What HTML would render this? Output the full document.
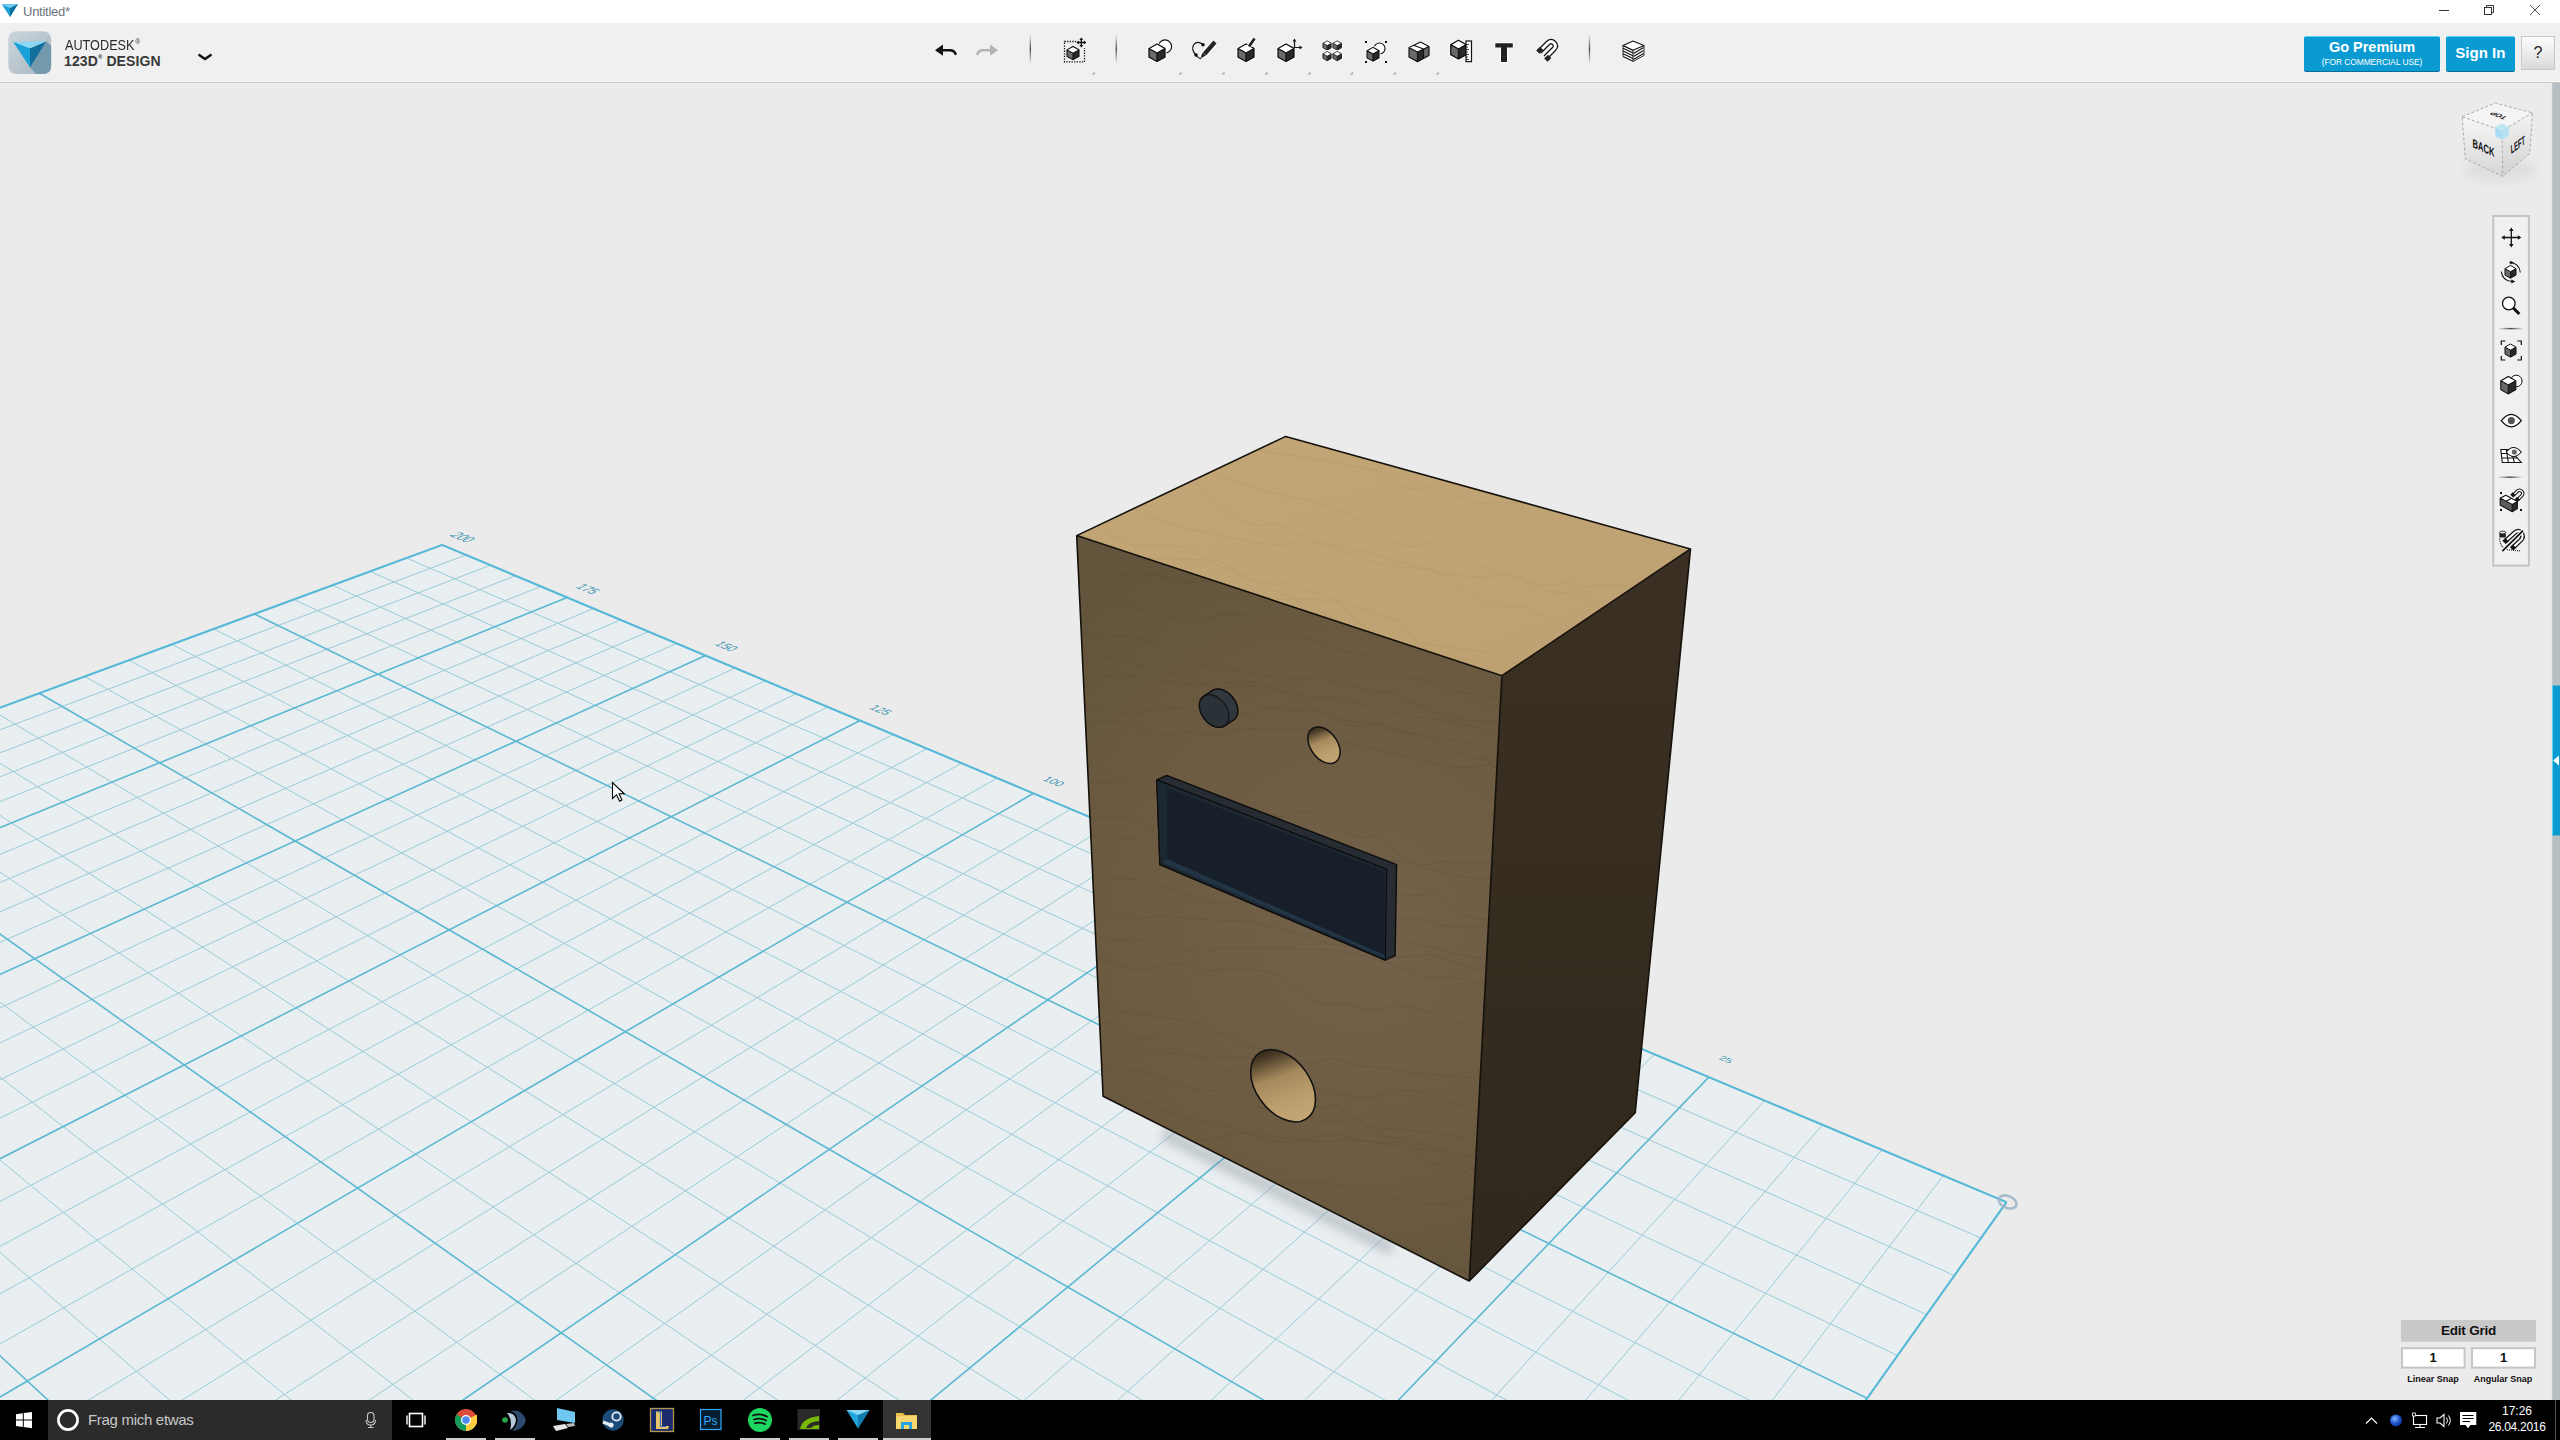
<!DOCTYPE html>
<html><head><meta charset="utf-8"><style>
*{box-sizing:border-box}
body{margin:0;width:2560px;height:1440px;overflow:hidden;position:relative;background:#ebebeb;font-family:"Liberation Sans",sans-serif}
.abs{position:absolute}
</style></head><body>
<div class="abs" style="left:0;top:0;width:2560px;height:23px;background:#fff"></div>
<div class="abs" style="left:0;top:23px;width:2560px;height:60px;background:#f0f0f0;border-bottom:1px solid #c4c4c4"></div>
<div class="abs" style="left:0;top:81px;width:2560px;height:1px;background:#f8f8f8"></div>
<div class="abs" style="left:0;top:83px;width:2552px;height:1px;background:#f3f3f3"></div>
<svg class="abs" style="left:0;top:0" width="2560" height="1440" viewBox="0 0 2560 1440">
<defs><clipPath id="vp"><rect x="0" y="84" width="2552" height="1316"/></clipPath></defs>
<g clip-path="url(#vp)">
<polygon points="2006.5,1202.2 442.1,544.9 -2431.8,1603.3 -4253.8,10013.4" fill="#e9eef1"/>
<path d="M1943.2 1175.6L-4045.0 9049.4M1881.8 1149.8L-3871.3 8247.7M1822.4 1124.8L-3724.6 7570.4M1764.7 1100.6L-3599.0 6990.8M1654.5 1054.3L-3395.3 6050.6M1601.7 1032.1L-3311.5 5664.1M1550.5 1010.6L-3237.2 5320.8M1500.8 989.7L-3170.7 5013.8M1405.3 949.6L-3056.8 4488.2M1359.5 930.3L-3007.7 4261.4M1315.0 911.6L-2962.8 4054.4M1271.6 893.4L-2921.7 3864.8M1188.1 858.3L-2849.1 3529.5M1148.0 841.5L-2816.8 3380.5M1108.9 825.0L-2786.9 3242.3M1070.7 809.0L-2759.0 3113.6M997.1 778.1L-2708.7 2881.3M961.6 763.2L-2685.9 2776.0M927.0 748.6L-2664.4 2677.2M893.2 734.4L-2644.3 2584.2M827.8 706.9L-2607.4 2413.7M796.2 693.7L-2590.4 2335.4M765.4 680.7L-2574.3 2261.3M735.2 668.0L-2559.1 2190.9M676.7 643.4L-2530.8 2060.6M648.4 631.6L-2517.7 2000.1M620.7 619.9L-2505.2 1942.4M593.6 608.5L-2493.3 1887.3M541.0 586.4L-2471.0 1784.4M515.6 575.7L-2460.6 1736.2M490.6 565.2L-2450.6 1690.1M466.1 554.9L-2441.0 1645.8M1981.0 1238.0L406.5 558.0M1954.4 1275.5L370.0 571.4M1926.6 1314.6L332.5 585.2M1897.6 1355.5L294.0 599.4M1835.2 1443.2L213.7 629.0M1801.8 1490.3L171.9 644.3M1766.6 1539.8L129.0 660.2M1729.6 1591.9L84.7 676.5M1649.6 1704.5L-7.6 710.5M1606.2 1765.6L-55.9 728.3M1560.3 1830.2L-105.7 746.6M1511.7 1898.6L-157.0 765.5M1405.2 2048.5L-264.6 805.1M1346.7 2130.8L-321.0 825.9M1284.3 2218.7L-379.3 847.4M1217.5 2312.7L-439.5 869.6M1068.8 2521.9L-566.4 916.3M985.8 2638.8L-633.1 940.9M896.0 2765.2L-702.3 966.4M798.6 2902.3L-774.1 992.8M576.7 3214.6L-925.8 1048.7M449.5 3393.6L-1006.1 1078.2M309.4 3590.8L-1089.6 1109.0M154.2 3809.2L-1176.5 1141.0M-212.3 4325.1L-1361.3 1209.1M-430.8 4632.7L-1459.7 1245.3M-679.3 4982.4L-1562.4 1283.1M-964.4 5383.7L-1669.8 1322.7M-1682.3 6394.1L-1899.8 1407.4M-2143.0 7042.4L-2023.1 1452.8M-2699.8 7826.1L-2152.6 1500.5M-3386.3 8792.4L-2288.6 1550.6" stroke="#9acbd7" stroke-width="1" fill="none"/>
<path d="M2006.5 1202.2L-4253.8 10013.4M1708.8 1077.1L-3490.3 6489.1M1452.4 969.4L-3110.9 4737.8M1229.3 875.6L-2883.9 3690.4M1033.5 793.3L-2733.0 2993.6M860.1 720.5L-2625.3 2496.5M705.6 655.6L-2544.6 2124.1M567.1 597.4L-2481.9 1834.7M442.1 544.9L-2431.8 1603.3M2006.5 1202.2L442.1 544.9M1867.1 1398.3L254.4 614.0M1690.7 1646.7L39.2 693.2M1460.1 1971.3L-209.9 785.0M1145.9 2413.5L-501.9 892.5M692.5 3051.6L-848.5 1020.2M-18.6 4052.5L-1267.0 1174.3M-1294.8 5848.7L-1782.1 1364.0M-4253.8 10013.4L-2431.8 1603.3" stroke="#5cb8d2" stroke-width="1.6" fill="none"/>
<path d="M2006.5 1202.2L442.1 544.9M442.1 544.9L-2431.8 1603.3M2006.5 1202.2L-4253.8 10013.4" stroke="#58bad8" stroke-width="2.0" fill="none"/>
<g font-family="Liberation Sans" font-size="10" fill="#3d97b2" text-anchor="middle">
<text x="0" y="3.6" transform="matrix(1.0350 0.4279 -1.5057 0.5545 463.01 537.15)">200</text>
<text x="0" y="3.6" transform="matrix(1.0350 0.4279 -1.3668 0.5547 588.06 588.84)">175</text>
<text x="0" y="3.6" transform="matrix(1.0350 0.4279 -1.2279 0.5548 726.59 646.11)">150</text>
<text x="0" y="3.6" transform="matrix(1.0350 0.4279 -1.0891 0.5550 880.90 709.91)">125</text>
<text x="0" y="3.6" transform="matrix(1.0350 0.4279 -0.9502 0.5551 1053.85 781.42)">100</text>
<text x="0" y="3.6" transform="matrix(1.0350 0.4279 -0.8114 0.5552 1249.05 862.12)">75</text>
<text x="0" y="3.6" transform="matrix(1.0350 0.4279 -0.6725 0.5554 1471.08 953.91)">50</text>
<text x="0" y="3.6" transform="matrix(1.0350 0.4279 -0.5336 0.5555 1725.88 1059.25)">25</text>
</g>
<ellipse cx="0" cy="0" rx="9.3" ry="6" transform="translate(2007.6 1202) rotate(22)" fill="none" stroke="#9db4c6" stroke-width="2.6" opacity="0.85"/>
<defs>
<radialGradient id="gfront" gradientUnits="userSpaceOnUse" cx="1360" cy="930" r="420"><stop offset="0" stop-color="#73614a"/><stop offset="0.6" stop-color="#6c5b41"/><stop offset="1" stop-color="#63543c"/></radialGradient>
<linearGradient id="gtop" x1="0" y1="0" x2="1" y2="1"><stop offset="0" stop-color="#c3a676"/><stop offset="1" stop-color="#bea172"/></linearGradient>
<linearGradient id="gright" x1="0" y1="0" x2="0" y2="1"><stop offset="0" stop-color="#3b3023"/><stop offset="1" stop-color="#30281d"/></linearGradient>
<linearGradient id="ghole" x1="0.1" y1="0.05" x2="0.75" y2="0.9"><stop offset="0" stop-color="#1e170e"/><stop offset="0.18" stop-color="#4a3b27"/><stop offset="0.45" stop-color="#a68a5d"/><stop offset="0.75" stop-color="#bc9e6d"/><stop offset="1" stop-color="#c4a675"/></linearGradient>
<filter id="blur6" x="-50%" y="-50%" width="200%" height="200%"><feGaussianBlur stdDeviation="5"/></filter>
</defs>
<polygon points="1165.0,1126.0 1395.0,1243.0 1390.0,1256.0 1160.0,1140.0" fill="#7f8a90" opacity="0.35" filter="url(#blur6)"/>
<polygon points="1076.7,535.6 1501.9,675.7 1469.3,1281.0 1103.1,1096.2" fill="url(#gfront)"/>
<polygon points="1501.9,675.7 1690.5,548.9 1635.2,1112.7 1469.3,1281.0" fill="url(#gright)"/>
<polygon points="1285.7,436.4 1690.5,548.9 1501.9,675.7 1076.7,535.6" fill="url(#gtop)"/>
<clipPath id="cfront"><polygon points="1076.7,535.6 1501.9,675.7 1469.3,1281.0 1103.1,1096.2"/></clipPath><clipPath id="ctop"><polygon points="1285.7,436.4 1690.5,548.9 1501.9,675.7 1076.7,535.6"/></clipPath>
<g clip-path="url(#cfront)" fill="none" stroke="#4a3d2b" stroke-width="0.8" opacity="0.2"><path d="M1070 556.5 Q1092.5 562.6 1117.5 574.6 Q1159.3 570.7 1184.3 583.0 Q1224.7 578.5 1249.7 580.3 Q1268.2 577.3 1293.2 579.4 Q1349.5 571.9 1374.5 579.6 Q1420.9 610.0 1445.9 607.8 Q1480.7 624.3 1505.7 637.0 Q1563.7 632.9 1588.7 642.9"/><path d="M1070 580.4 Q1100.4 595.2 1125.4 604.1 Q1169.5 618.3 1194.5 621.8 Q1236.9 607.6 1261.9 620.0 Q1287.2 637.1 1312.2 639.1 Q1342.9 653.7 1367.9 655.0 Q1397.9 683.6 1422.9 678.0 Q1450.1 694.2 1475.1 693.5 Q1533.8 708.4 1558.8 714.3"/><path d="M1070 625.6 Q1090.9 643.0 1115.9 635.8 Q1138.5 635.5 1163.5 648.4 Q1211.9 672.5 1236.9 670.4 Q1295.7 682.6 1320.7 677.1 Q1365.4 691.6 1390.4 692.8 Q1447.4 720.2 1472.4 720.9 Q1520.6 724.6 1545.6 719.0"/><path d="M1070 646.9 Q1134.7 664.9 1159.7 670.9 Q1193.9 676.3 1218.9 689.6 Q1257.0 680.6 1282.0 691.3 Q1300.0 703.1 1325.0 713.5 Q1352.4 733.1 1377.4 722.7 Q1396.4 735.4 1421.4 734.0 Q1480.6 768.1 1505.6 757.9 Q1534.5 764.0 1559.5 768.0"/><path d="M1070 679.7 Q1132.9 671.7 1157.9 680.8 Q1184.5 684.3 1209.5 684.7 Q1253.9 675.8 1278.9 689.7 Q1314.9 700.1 1339.9 698.2 Q1402.5 718.1 1427.5 717.7 Q1473.4 724.2 1498.4 736.7 Q1558.4 769.7 1583.4 759.2"/><path d="M1070 706.0 Q1104.6 704.4 1129.6 715.5 Q1176.3 701.5 1201.3 713.6 Q1226.8 710.7 1251.8 715.2 Q1269.4 701.4 1294.4 711.2 Q1314.5 706.2 1339.5 719.5 Q1398.2 726.6 1423.2 736.4 Q1450.8 740.4 1475.8 744.2 Q1496.9 782.9 1521.9 769.1"/><path d="M1070 727.3 Q1109.2 715.1 1134.2 726.2 Q1166.3 740.4 1191.3 731.2 Q1214.4 740.7 1239.4 728.0 Q1280.8 730.2 1305.8 729.0 Q1322.2 756.4 1347.2 743.0 Q1405.3 755.9 1430.3 762.6 Q1463.7 771.9 1488.7 764.3 Q1530.3 782.0 1555.3 786.8"/><path d="M1070 750.5 Q1125.6 789.8 1150.6 779.9 Q1205.9 810.5 1230.9 803.8 Q1257.2 813.3 1282.2 817.4 Q1298.7 808.1 1323.7 814.3 Q1351.6 846.6 1376.6 833.9 Q1414.0 875.4 1439.0 861.7 Q1501.7 862.3 1526.7 870.1"/><path d="M1070 778.5 Q1094.8 785.0 1119.8 781.5 Q1179.9 805.5 1204.9 806.1 Q1252.5 817.6 1277.5 829.2 Q1325.5 864.1 1350.5 856.2 Q1403.0 859.4 1428.0 868.4 Q1482.5 884.2 1507.5 875.7 Q1571.1 882.4 1596.1 885.2"/><path d="M1070 820.9 Q1121.2 812.3 1146.2 822.7 Q1168.8 858.1 1193.8 849.5 Q1216.1 887.0 1241.1 873.6 Q1289.0 882.9 1314.0 881.5 Q1335.5 891.2 1360.5 878.0 Q1408.0 904.0 1433.0 891.9 Q1469.7 926.7 1494.7 917.5 Q1520.2 916.3 1545.2 922.1"/><path d="M1070 834.8 Q1114.3 837.4 1139.3 839.6 Q1160.9 862.5 1185.9 866.6 Q1223.8 893.7 1248.8 882.4 Q1284.8 909.7 1309.8 909.6 Q1351.4 909.9 1376.4 923.4 Q1413.4 911.7 1438.4 925.6 Q1493.4 926.7 1518.4 927.5"/><path d="M1070 872.5 Q1112.8 880.1 1137.8 879.6 Q1180.6 891.2 1205.6 902.3 Q1248.6 900.5 1273.6 906.7 Q1327.2 921.7 1352.2 920.0 Q1405.2 945.4 1430.2 947.0 Q1475.8 960.5 1500.8 960.2 Q1550.5 972.5 1575.5 971.6"/><path d="M1070 895.6 Q1132.1 925.9 1157.1 915.3 Q1219.2 921.8 1244.2 920.2 Q1306.3 934.6 1331.3 944.7 Q1352.4 943.8 1377.4 955.8 Q1404.5 959.0 1429.5 954.2 Q1483.7 971.1 1508.7 980.7 Q1559.5 989.2 1584.5 999.2"/><path d="M1070 931.7 Q1133.4 947.8 1158.4 935.1 Q1193.3 961.4 1218.3 947.7 Q1274.9 947.3 1299.9 949.2 Q1340.7 948.2 1365.7 956.7 Q1396.6 963.8 1421.6 977.3 Q1464.3 974.7 1489.3 988.2 Q1520.9 1005.8 1545.9 1005.5"/><path d="M1070 943.3 Q1134.3 979.3 1159.3 966.1 Q1179.5 958.2 1204.5 971.1 Q1258.4 965.9 1283.4 976.3 Q1319.6 1012.2 1344.6 1003.3 Q1372.5 1016.1 1397.5 1004.4 Q1441.0 1012.7 1466.0 1024.2 Q1483.9 1041.5 1508.9 1043.6 Q1527.5 1075.3 1552.5 1071.5"/><path d="M1070 986.0 Q1089.2 999.0 1114.2 1011.1 Q1172.3 1018.1 1197.3 1022.6 Q1240.0 1043.6 1265.0 1050.1 Q1286.4 1056.7 1311.4 1064.0 Q1331.9 1052.9 1356.9 1065.5 Q1382.0 1066.6 1407.0 1072.1 Q1460.0 1078.0 1485.0 1078.0 Q1508.9 1072.3 1533.9 1085.7"/><path d="M1070 1003.0 Q1085.8 1025.4 1110.8 1023.9 Q1135.2 1048.2 1160.2 1036.1 Q1180.6 1058.0 1205.6 1059.9 Q1245.3 1081.3 1270.3 1084.3 Q1310.6 1117.2 1335.6 1103.7 Q1367.8 1133.8 1392.8 1128.0 Q1439.6 1133.5 1464.6 1137.7 Q1482.3 1126.1 1507.3 1138.2 Q1559.3 1133.4 1584.3 1142.8"/><path d="M1070 1027.7 Q1127.1 1058.1 1152.1 1053.3 Q1181.2 1051.7 1206.2 1057.5 Q1244.1 1057.4 1269.1 1058.9 Q1297.3 1100.8 1322.3 1087.6 Q1364.6 1104.9 1389.6 1091.9 Q1420.1 1086.0 1445.1 1100.0 Q1479.2 1112.2 1504.2 1112.2 Q1529.3 1111.5 1554.3 1125.3"/><path d="M1070 1059.3 Q1089.5 1056.0 1114.5 1068.9 Q1130.6 1067.7 1155.6 1075.2 Q1199.9 1096.2 1224.9 1089.2 Q1272.8 1120.2 1297.8 1109.5 Q1332.2 1130.2 1357.2 1116.6 Q1379.7 1141.3 1404.7 1137.3 Q1421.9 1172.6 1446.9 1161.7 Q1493.3 1191.4 1518.3 1182.6"/><path d="M1070 1084.8 Q1111.2 1107.3 1136.2 1097.9 Q1191.4 1124.4 1216.4 1122.0 Q1276.1 1146.7 1301.1 1141.3 Q1327.6 1128.0 1352.6 1138.3 Q1385.6 1147.3 1410.6 1137.9 Q1453.5 1158.8 1478.5 1155.2 Q1527.6 1154.0 1552.6 1167.9"/><path d="M1070 1126.0 Q1122.4 1140.0 1147.4 1139.1 Q1195.4 1143.9 1220.4 1137.3 Q1248.0 1129.3 1273.0 1135.8 Q1324.5 1145.5 1349.5 1138.8 Q1413.2 1148.3 1438.2 1151.6 Q1477.2 1178.3 1502.2 1170.8 Q1548.0 1176.9 1573.0 1188.7"/><path d="M1070 1140.9 Q1097.7 1156.7 1122.7 1162.2 Q1166.1 1146.3 1191.1 1158.6 Q1219.5 1182.9 1244.5 1177.5 Q1293.3 1183.8 1318.3 1183.4 Q1356.5 1184.6 1381.5 1195.2 Q1441.2 1211.4 1466.2 1198.0 Q1528.0 1193.5 1553.0 1194.6"/><path d="M1070 1182.4 Q1133.4 1187.2 1158.4 1193.7 Q1183.9 1213.7 1208.9 1221.8 Q1253.0 1223.3 1278.0 1222.6 Q1340.6 1232.1 1365.6 1223.2 Q1406.0 1255.0 1431.0 1249.3 Q1457.6 1275.4 1482.6 1275.8 Q1498.9 1271.7 1523.9 1272.0"/><path d="M1070 1203.0 Q1100.1 1199.4 1125.1 1203.8 Q1155.9 1214.4 1180.9 1228.4 Q1233.4 1242.3 1258.4 1252.9 Q1319.8 1284.4 1344.8 1273.1 Q1374.2 1278.8 1399.2 1281.8 Q1464.2 1293.9 1489.2 1297.8 Q1525.6 1290.5 1550.6 1303.2"/><path d="M1070 1224.0 Q1126.7 1241.9 1151.7 1229.7 Q1179.2 1235.1 1204.2 1234.8 Q1228.7 1256.2 1253.7 1243.5 Q1312.9 1270.7 1337.9 1267.1 Q1398.6 1296.4 1423.6 1295.1 Q1474.6 1299.3 1499.6 1292.7 Q1537.1 1318.4 1562.1 1314.3"/><path d="M1070 1255.7 Q1087.4 1272.8 1112.4 1283.2 Q1151.1 1285.3 1176.1 1290.9 Q1228.0 1313.4 1253.0 1320.1 Q1300.8 1327.9 1325.8 1326.3 Q1360.5 1318.6 1385.5 1328.0 Q1410.9 1354.8 1435.9 1354.8 Q1461.9 1395.5 1486.9 1381.6 Q1524.4 1373.8 1549.4 1382.4"/></g>
<g clip-path="url(#ctop)" fill="none" stroke="#a68a5c" stroke-width="0.8" opacity="0.3"><path d="M1070 413.5 Q1110.5 407.7 1140.5 417.1 Q1176.0 453.8 1206.0 439.9 Q1271.0 453.3 1301.0 456.4 Q1352.4 465.6 1382.4 471.5 Q1406.2 499.4 1436.2 482.6 Q1463.7 507.4 1493.7 502.7 Q1565.5 503.1 1595.5 511.3 Q1630.4 525.4 1660.4 527.3 Q1737.6 574.7 1767.6 561.3"/><path d="M1070 434.3 Q1091.9 477.0 1121.9 462.7 Q1170.3 468.2 1200.3 486.2 Q1243.8 535.0 1273.8 523.3 Q1345.1 553.1 1375.1 562.2 Q1401.7 569.2 1431.7 568.4 Q1492.6 614.0 1522.6 606.0 Q1581.5 635.1 1611.5 636.6 Q1664.5 648.4 1694.5 638.2 Q1728.5 680.2 1758.5 675.0"/><path d="M1070 460.9 Q1097.7 475.8 1127.7 470.9 Q1189.6 460.0 1219.6 475.4 Q1271.1 494.7 1301.1 498.7 Q1334.5 505.2 1364.5 522.8 Q1402.6 557.7 1432.6 541.2 Q1491.2 575.7 1521.2 576.6 Q1555.3 603.0 1585.3 586.4 Q1647.6 581.5 1677.6 598.7 Q1727.5 622.8 1757.5 625.7"/><path d="M1070 482.1 Q1130.0 509.3 1160.0 519.1 Q1182.1 529.8 1212.1 532.6 Q1273.0 551.3 1303.0 540.6 Q1367.4 550.2 1397.4 560.8 Q1475.6 584.8 1505.6 573.2 Q1539.4 591.5 1569.4 582.1 Q1607.1 620.0 1637.1 620.2 Q1668.4 626.1 1698.4 629.1 Q1758.3 654.3 1788.3 667.0"/><path d="M1070 506.3 Q1102.8 532.4 1132.8 545.3 Q1155.9 543.8 1185.9 547.7 Q1259.8 591.4 1289.8 583.0 Q1369.6 614.1 1399.6 620.3 Q1430.8 666.6 1460.8 657.7 Q1482.7 679.9 1512.7 684.3 Q1555.1 685.6 1585.1 697.6 Q1605.3 703.4 1635.3 708.7 Q1712.6 730.4 1742.6 713.7"/><path d="M1070 525.3 Q1111.4 569.8 1141.4 558.2 Q1187.3 559.2 1217.3 560.2 Q1259.7 585.9 1289.7 596.9 Q1331.6 615.9 1361.6 632.8 Q1406.2 674.9 1436.2 665.3 Q1458.6 650.9 1488.6 666.7 Q1563.9 685.9 1593.9 677.0 Q1667.8 682.3 1697.8 690.5 Q1775.2 706.6 1805.2 715.2"/><path d="M1070 555.5 Q1109.0 548.6 1139.0 566.5 Q1204.3 608.0 1234.3 603.1 Q1310.9 594.5 1340.9 604.1 Q1389.4 658.7 1419.4 642.4 Q1462.6 649.9 1492.6 652.4 Q1542.2 678.1 1572.2 689.6 Q1640.4 730.7 1670.4 719.1 Q1736.8 737.2 1766.8 743.4"/><path d="M1070 571.1 Q1111.7 587.2 1141.7 602.4 Q1173.6 623.4 1203.6 632.5 Q1227.4 635.8 1257.4 633.9 Q1297.0 686.9 1327.0 673.1 Q1406.2 668.7 1436.2 683.7 Q1462.0 711.2 1492.0 703.6 Q1538.9 710.0 1568.9 713.0 Q1626.1 748.9 1656.1 739.9 Q1726.9 752.9 1756.9 766.5"/><path d="M1070 601.5 Q1107.6 619.6 1137.6 624.1 Q1201.9 623.0 1231.9 632.1 Q1266.6 652.1 1296.6 638.2 Q1351.3 647.5 1381.3 651.3 Q1460.9 661.9 1490.9 671.6 Q1559.4 715.4 1589.4 697.7 Q1615.5 728.2 1645.5 716.7 Q1716.0 736.7 1746.0 753.3"/><path d="M1070 614.7 Q1097.2 639.3 1127.2 622.3 Q1182.1 654.9 1212.1 659.5 Q1284.1 668.8 1314.1 677.5 Q1380.8 701.1 1410.8 715.3 Q1466.5 729.9 1496.5 740.1 Q1538.7 735.1 1568.7 745.7 Q1604.0 775.2 1634.0 769.7 Q1666.2 763.9 1696.2 770.2 Q1756.9 770.8 1786.9 777.6"/><path d="M1070 635.3 Q1137.7 641.5 1167.7 657.2 Q1193.8 674.8 1223.8 673.0 Q1282.2 664.5 1312.2 676.6 Q1373.9 685.2 1403.9 693.0 Q1442.3 724.4 1472.3 731.2 Q1526.3 742.4 1556.3 745.4 Q1628.2 780.4 1658.2 785.3 Q1690.0 803.8 1720.0 814.4"/><path d="M1070 654.1 Q1144.1 682.6 1174.1 671.0 Q1218.5 705.0 1248.5 706.4 Q1278.2 708.8 1308.2 707.0 Q1366.7 728.5 1396.7 743.3 Q1454.0 758.3 1484.0 758.2 Q1512.7 770.3 1542.7 769.5 Q1618.3 773.5 1648.3 773.9 Q1716.6 801.6 1746.6 812.5"/><path d="M1070 678.0 Q1146.6 716.4 1176.6 717.0 Q1199.8 750.1 1229.8 754.1 Q1304.0 790.6 1334.0 778.9 Q1363.7 800.3 1393.7 810.3 Q1437.9 856.0 1467.9 844.2 Q1498.9 849.3 1528.9 852.9 Q1580.0 854.7 1610.0 868.3 Q1644.8 911.6 1674.8 897.3 Q1697.3 929.0 1727.3 919.8"/><path d="M1070 698.6 Q1140.3 706.9 1170.3 703.3 Q1223.3 721.4 1253.3 728.4 Q1298.5 749.0 1328.5 751.7 Q1388.0 767.4 1418.0 769.6 Q1439.4 794.0 1469.4 794.3 Q1503.5 835.0 1533.5 824.9 Q1581.0 831.1 1611.0 832.1 Q1637.5 834.7 1667.5 837.2 Q1693.0 855.2 1723.0 854.9"/></g>
<path d="M1076.7 535.6L1285.7 436.4L1690.5 548.9L1635.2 1112.7L1469.3 1281L1103.1 1096.2Z M1076.7 535.6L1501.9 675.7L1690.5 548.9 M1501.9 675.7L1469.3 1281" stroke="#15110b" stroke-width="1.6" fill="none" stroke-linejoin="round"/>
<ellipse cx="0" cy="0" rx="1" ry="1" transform="matrix(32.4 13.8 0 33.4 1283.1 1085.7)" fill="url(#ghole)" stroke="#111" stroke-width="1.6" vector-effect="non-scaling-stroke"/>
<ellipse cx="0" cy="0" rx="1" ry="1" transform="matrix(16.1 6.9 0 16.9 1324 745.2)" fill="url(#ghole)" stroke="#111" stroke-width="1.5" vector-effect="non-scaling-stroke"/>
<polygon points="1199.4,704.8 1199.5,703.5 1199.7,702.3 1200.0,701.1 1200.5,700.0 1201.0,699.0 1201.6,698.1 1202.4,697.2 1203.2,696.5 1204.1,695.9 1212.9,690.2 1213.9,689.7 1215.0,689.4 1216.1,689.1 1217.2,689.0 1218.5,689.0 1219.7,689.1 1221.0,689.4 1222.3,689.7 1223.6,690.2 1224.9,690.8 1226.1,691.5 1227.4,692.3 1228.6,693.2 1229.8,694.2 1230.9,695.3 1232.0,696.5 1233.0,697.7 1233.9,699.0 1234.7,700.4 1235.5,701.7 1236.1,703.1 1236.7,704.6 1237.1,706.0 1237.5,707.4 1237.7,708.8 1237.8,710.2 1237.8,711.5 1237.7,712.8 1237.5,714.0 1237.2,715.2 1236.7,716.3 1236.2,717.3 1235.6,718.2 1234.8,719.1 1234.0,719.8 1233.1,720.4 1224.3,726.1 1223.3,726.6 1222.2,726.9 1221.1,727.2 1220.0,727.3 1218.7,727.3 1217.5,727.2 1216.2,726.9 1214.9,726.6 1213.6,726.1 1212.3,725.5 1211.1,724.8 1209.8,724.0 1208.6,723.1 1207.4,722.1 1206.3,721.0 1205.2,719.8 1204.2,718.6 1203.3,717.3 1202.5,715.9 1201.7,714.6 1201.1,713.2 1200.5,711.7 1200.1,710.3 1199.7,708.9 1199.5,707.5 1199.4,706.1" fill="#30373d" stroke="#0e0e0e" stroke-width="1.5" stroke-linejoin="round"/>
<ellipse cx="0" cy="0" rx="15.6" ry="15.6" transform="matrix(0.9497 0.3129 0.047 0.9989 1214.2 711.0)" fill="#2a3137" stroke="#111" stroke-width="1.3"/>
<polygon points="1156.8,779.9 1166.7,775.3 1396.6,864.6 1395.1,955.5 1385.2,960.1 1159.9,864.6" fill="#262c31" stroke="#0c0c0c" stroke-width="1.4" stroke-linejoin="round"/>
<polygon points="1156.8,779.9 1386.7,869.2 1385.2,960.1 1159.9,864.6" fill="#1e2830" stroke="#0c0c0c" stroke-width="1.2"/>
<polygon points="1166.5,788.0 1385.0,871.5 1384.0,955.0 1167.0,859.0" fill="#17202a"/>
<polygon points="1167.0,859.0 1384.0,955.0 1385.0,958.0 1162.0,862.0" fill="#233647"/>
<path d="M612.5 782.5V798.5L616.5 794.8L619.6 801.2L621.9 800.1L619 793.8H624.2Z" fill="#fff" stroke="#000" stroke-width="1.1" stroke-linejoin="miter"/>
</g>
<defs>
<linearGradient id="sepv" x1="0" y1="0" x2="0" y2="1"><stop offset="0" stop-color="#555" stop-opacity="0"/><stop offset="0.5" stop-color="#444"/><stop offset="1" stop-color="#555" stop-opacity="0"/></linearGradient>
<linearGradient id="seph" x1="0" y1="0" x2="1" y2="0"><stop offset="0" stop-color="#555" stop-opacity="0"/><stop offset="0.5" stop-color="#444"/><stop offset="1" stop-color="#555" stop-opacity="0"/></linearGradient>
<linearGradient id="logobg" x1="0" y1="0" x2="1" y2="1"><stop offset="0" stop-color="#ccd5dc"/><stop offset="1" stop-color="#a9b6c0"/></linearGradient>
</defs>
<polygon points="2,4.5 18,4 10,17" fill="#1b9fd8"/><polygon points="10,8 18,4 10,17" fill="#0f6f9c"/><polygon points="2,4.5 18,4 10,8" fill="#76cdee"/>
<rect x="2439" y="10" width="10" height="1" fill="#333"/>
<rect x="2484.5" y="7.5" width="7" height="7" fill="none" stroke="#333" stroke-width="1"/><path d="M2486.5 7.5V5.5H2493.5V12.5H2491.5" fill="none" stroke="#333" stroke-width="1"/>
<path d="M2530 5L2540 15M2540 5L2530 15" stroke="#444" stroke-width="0.9"/>
<rect x="8.3" y="31.2" width="42.8" height="42.8" rx="8" fill="url(#logobg)"/>
<path d="M46.4 41.2L51.1 46V66Q51.1 74 43 74H36.5L30 67.5Z" fill="#7499ad"/>
<polygon points="13.1,41.7 30,48.3 30,67.5" fill="#1aa1d8"/><polygon points="46.4,41.2 30,48.3 30,67.5" fill="#136f9c"/><polygon points="13.1,41.7 46.4,41.2 30,48.3" fill="#8bd6f2"/>
<path d="M198.5 54.5L205 59L211.5 54.5" fill="none" stroke="#111" stroke-width="2.4"/>
<path d="M941 50.2H950Q954 50.2 955.5 53.8" fill="none" stroke="#111" stroke-width="2.6" stroke-linecap="round"/><polygon points="935,50.2 943,44.6 943,55.8" fill="#111"/>
<path d="M992 50.2H983Q979 50.2 977.5 53.8" fill="none" stroke="#b3b3b3" stroke-width="2.6" stroke-linecap="round"/><polygon points="998,50.2 990,44.6 990,55.8" fill="#b3b3b3"/>
<rect x="1029.7" y="34" width="1.3" height="30" fill="url(#sepv)"/>
<rect x="1115.6000000000001" y="34" width="1.3" height="30" fill="url(#sepv)"/>
<rect x="1588.8000000000002" y="34" width="1.3" height="30" fill="url(#sepv)"/>
<rect x="1064.5" y="41.5" width="20" height="20.3" fill="none" stroke="#111" stroke-width="1.3" stroke-dasharray="1.3 1.3"/>
<rect x="1076" y="37" width="11" height="11" fill="#f0f0f0"/>
<path d="M1081.3 38.5V46.5M1077.3 42.5H1085.3" stroke="#111" stroke-width="1.3"/><polygon points="1081.3,37.5 1079.4,40 1083.2,40" fill="#111"/><polygon points="1081.3,47.5 1079.4,45 1083.2,45" fill="#111"/><polygon points="1076.3,42.5 1078.8,40.6 1078.8,44.4" fill="#111"/><polygon points="1086.3,42.5 1083.8,40.6 1083.8,44.4" fill="#111"/>
<polygon points="1073.00,46.50 1079.00,49.86 1073.00,53.22 1067.00,49.86" fill="#fff"/><polygon points="1067.00,49.86 1073.00,53.22 1073.00,59.72 1067.00,56.36" fill="#6a6a6a"/><polygon points="1073.00,53.22 1079.00,49.86 1079.00,56.36 1073.00,59.72" fill="#2a2a2a"/><path d="M1067.00 49.86L1073.00 46.50L1079.00 49.86L1079.00 56.36L1073.00 59.72L1067.00 56.36Z M1067.00 49.86L1073.00 53.22L1079.00 49.86M1073.00 53.22L1073.00 59.72" fill="none" stroke="#111" stroke-width="1.1" stroke-linejoin="miter"/>
<circle cx="1165" cy="46.5" r="6.6" fill="#fff" stroke="#111" stroke-width="1.2"/>
<polygon points="1157.00,44.00 1165.00,48.48 1165.00,57.08 1157.00,61.56 1149.00,57.08 1149.00,48.48" fill="none" stroke="#fff" stroke-width="2.9000000000000004" stroke-linejoin="miter"/><polygon points="1157.00,44.00 1165.00,48.48 1157.00,52.96 1149.00,48.48" fill="#fff"/><polygon points="1149.00,48.48 1157.00,52.96 1157.00,61.56 1149.00,57.08" fill="#6a6a6a"/><polygon points="1157.00,52.96 1165.00,48.48 1165.00,57.08 1157.00,61.56" fill="#2a2a2a"/><path d="M1149.00 48.48L1157.00 44.00L1165.00 48.48L1165.00 57.08L1157.00 61.56L1149.00 57.08Z M1149.00 48.48L1157.00 52.96L1165.00 48.48M1157.00 52.96L1157.00 61.56" fill="none" stroke="#111" stroke-width="1.3" stroke-linejoin="miter"/>
<path d="M1203 44.5Q1197 40 1193.5 45Q1191 50 1196 55Q1199 59 1201 58.5" fill="none" stroke="#111" stroke-width="1.2"/>
<circle cx="1203" cy="44.8" r="1.8" fill="#111"/><circle cx="1196" cy="55" r="1.8" fill="#111"/>
<path d="M1215 42L1203 55.5" stroke="#fff" stroke-width="6.5"/><path d="M1215 42L1204.5 54" stroke="#222" stroke-width="4.2"/><polygon points="1202.5,52.5 1205.8,55.5 1200.5,58.5" fill="#222"/>
<polygon points="1246.00,44.00 1254.00,48.48 1254.00,57.08 1246.00,61.56 1238.00,57.08 1238.00,48.48" fill="none" stroke="#fff" stroke-width="2.9000000000000004" stroke-linejoin="miter"/><polygon points="1246.00,44.00 1254.00,48.48 1246.00,52.96 1238.00,48.48" fill="#fff"/><polygon points="1238.00,48.48 1246.00,52.96 1246.00,61.56 1238.00,57.08" fill="#6a6a6a"/><polygon points="1246.00,52.96 1254.00,48.48 1254.00,57.08 1246.00,61.56" fill="#2a2a2a"/><path d="M1238.00 48.48L1246.00 44.00L1254.00 48.48L1254.00 57.08L1246.00 61.56L1238.00 57.08Z M1238.00 48.48L1246.00 52.96L1254.00 48.48M1246.00 52.96L1246.00 61.56" fill="none" stroke="#111" stroke-width="1.3" stroke-linejoin="miter"/>
<path d="M1254.5 38.5L1248.5 47" stroke="#fff" stroke-width="4.5"/><path d="M1254.5 38.5L1249 46.5" stroke="#222" stroke-width="2.8"/>
<polygon points="1286.00,44.00 1294.00,48.48 1294.00,57.08 1286.00,61.56 1278.00,57.08 1278.00,48.48" fill="none" stroke="#fff" stroke-width="2.9000000000000004" stroke-linejoin="miter"/><polygon points="1286.00,44.00 1294.00,48.48 1286.00,52.96 1278.00,48.48" fill="#fff"/><polygon points="1278.00,48.48 1286.00,52.96 1286.00,61.56 1278.00,57.08" fill="#6a6a6a"/><polygon points="1286.00,52.96 1294.00,48.48 1294.00,57.08 1286.00,61.56" fill="#2a2a2a"/><path d="M1278.00 48.48L1286.00 44.00L1294.00 48.48L1294.00 57.08L1286.00 61.56L1278.00 57.08Z M1278.00 48.48L1286.00 52.96L1294.00 48.48M1286.00 52.96L1286.00 61.56" fill="none" stroke="#111" stroke-width="1.3" stroke-linejoin="miter"/>
<path d="M1294.5 48V40.5M1294.5 47.5H1300" stroke="#111" stroke-width="1.2"/><polygon points="1294.5,38.5 1292.6,41.5 1296.4,41.5" fill="#111"/><polygon points="1302.5,47.5 1299.5,45.6 1299.5,49.4" fill="#111"/>
<polygon points="1327.20,40.80 1331.50,43.21 1331.50,47.81 1327.20,50.22 1322.90,47.81 1322.90,43.21" fill="none" stroke="#fff" stroke-width="2.4000000000000004" stroke-linejoin="miter"/><polygon points="1327.20,40.80 1331.50,43.21 1327.20,45.62 1322.90,43.21" fill="#fff"/><polygon points="1322.90,43.21 1327.20,45.62 1327.20,50.22 1322.90,47.81" fill="#6a6a6a"/><polygon points="1327.20,45.62 1331.50,43.21 1331.50,47.81 1327.20,50.22" fill="#2a2a2a"/><path d="M1322.90 43.21L1327.20 40.80L1331.50 43.21L1331.50 47.81L1327.20 50.22L1322.90 47.81Z M1322.90 43.21L1327.20 45.62L1331.50 43.21M1327.20 45.62L1327.20 50.22" fill="none" stroke="#111" stroke-width="0.8" stroke-linejoin="miter"/>
<polygon points="1337.20,40.80 1341.50,43.21 1341.50,47.81 1337.20,50.22 1332.90,47.81 1332.90,43.21" fill="none" stroke="#fff" stroke-width="2.4000000000000004" stroke-linejoin="miter"/><polygon points="1337.20,40.80 1341.50,43.21 1337.20,45.62 1332.90,43.21" fill="#fff"/><polygon points="1332.90,43.21 1337.20,45.62 1337.20,50.22 1332.90,47.81" fill="#6a6a6a"/><polygon points="1337.20,45.62 1341.50,43.21 1341.50,47.81 1337.20,50.22" fill="#2a2a2a"/><path d="M1332.90 43.21L1337.20 40.80L1341.50 43.21L1341.50 47.81L1337.20 50.22L1332.90 47.81Z M1332.90 43.21L1337.20 45.62L1341.50 43.21M1337.20 45.62L1337.20 50.22" fill="none" stroke="#111" stroke-width="0.8" stroke-linejoin="miter"/>
<polygon points="1327.20,51.40 1331.50,53.81 1331.50,58.41 1327.20,60.82 1322.90,58.41 1322.90,53.81" fill="none" stroke="#fff" stroke-width="2.4000000000000004" stroke-linejoin="miter"/><polygon points="1327.20,51.40 1331.50,53.81 1327.20,56.22 1322.90,53.81" fill="#fff"/><polygon points="1322.90,53.81 1327.20,56.22 1327.20,60.82 1322.90,58.41" fill="#6a6a6a"/><polygon points="1327.20,56.22 1331.50,53.81 1331.50,58.41 1327.20,60.82" fill="#2a2a2a"/><path d="M1322.90 53.81L1327.20 51.40L1331.50 53.81L1331.50 58.41L1327.20 60.82L1322.90 58.41Z M1322.90 53.81L1327.20 56.22L1331.50 53.81M1327.20 56.22L1327.20 60.82" fill="none" stroke="#111" stroke-width="0.8" stroke-linejoin="miter"/>
<polygon points="1337.20,51.40 1341.50,53.81 1341.50,58.41 1337.20,60.82 1332.90,58.41 1332.90,53.81" fill="none" stroke="#fff" stroke-width="2.4000000000000004" stroke-linejoin="miter"/><polygon points="1337.20,51.40 1341.50,53.81 1337.20,56.22 1332.90,53.81" fill="#fff"/><polygon points="1332.90,53.81 1337.20,56.22 1337.20,60.82 1332.90,58.41" fill="#6a6a6a"/><polygon points="1337.20,56.22 1341.50,53.81 1341.50,58.41 1337.20,60.82" fill="#2a2a2a"/><path d="M1332.90 53.81L1337.20 51.40L1341.50 53.81L1341.50 58.41L1337.20 60.82L1332.90 58.41Z M1332.90 53.81L1337.20 56.22L1341.50 53.81M1337.20 56.22L1337.20 60.82" fill="none" stroke="#111" stroke-width="0.8" stroke-linejoin="miter"/>
<rect x="1365" y="41" width="2" height="2" fill="#111"/>
<rect x="1385" y="41" width="2" height="2" fill="#111"/>
<rect x="1365" y="61" width="2" height="2" fill="#111"/>
<rect x="1385" y="61" width="2" height="2" fill="#111"/>
<circle cx="1379.5" cy="48.5" r="5.5" fill="#fff" stroke="#111" stroke-width="1.1"/>
<polygon points="1373.00,47.30 1379.00,50.66 1379.00,57.86 1373.00,61.22 1367.00,57.86 1367.00,50.66" fill="none" stroke="#fff" stroke-width="2.7" stroke-linejoin="miter"/><polygon points="1373.00,47.30 1379.00,50.66 1373.00,54.02 1367.00,50.66" fill="#fff"/><polygon points="1367.00,50.66 1373.00,54.02 1373.00,61.22 1367.00,57.86" fill="#6a6a6a"/><polygon points="1373.00,54.02 1379.00,50.66 1379.00,57.86 1373.00,61.22" fill="#2a2a2a"/><path d="M1367.00 50.66L1373.00 47.30L1379.00 50.66L1379.00 57.86L1373.00 61.22L1367.00 57.86Z M1367.00 50.66L1373.00 54.02L1379.00 50.66M1373.00 54.02L1373.00 61.22" fill="none" stroke="#111" stroke-width="1.1" stroke-linejoin="miter"/>
<polygon points="1409,47.5 1420.5,42 1429,46.5 1429,55.5 1417.5,61.6 1409,57" fill="#fff" stroke="#fff" stroke-width="2"/>
<polygon points="1409,47.5 1420.5,42 1429,46.5 1417.5,52" fill="#fff"/><polygon points="1409,47.5 1417.5,52 1417.5,61.6 1409,57" fill="#6a6a6a"/><polygon points="1417.5,52 1429,46.5 1429,55.5 1417.5,61.6" fill="#2a2a2a"/><polygon points="1423.5,49 1429,46.5 1429,55.5 1423.5,58.5" fill="#666"/>
<path d="M1409 47.5L1420.5 42L1429 46.5V55.5L1417.5 61.6L1409 57Z M1409 47.5L1417.5 52L1429 46.5 M1417.5 52V61.6 M1413.5 45.2L1423.5 49V58.5" fill="none" stroke="#111" stroke-width="1.2" stroke-linejoin="round"/>
<polygon points="1458.50,40.30 1466.25,44.64 1466.25,54.64 1458.50,58.98 1450.75,54.64 1450.75,44.64" fill="none" stroke="#fff" stroke-width="2.9000000000000004" stroke-linejoin="miter"/><polygon points="1458.50,40.30 1466.25,44.64 1458.50,48.98 1450.75,44.64" fill="#fff"/><polygon points="1450.75,44.64 1458.50,48.98 1458.50,58.98 1450.75,54.64" fill="#6a6a6a"/><polygon points="1458.50,48.98 1466.25,44.64 1466.25,54.64 1458.50,58.98" fill="#2a2a2a"/><path d="M1450.75 44.64L1458.50 40.30L1466.25 44.64L1466.25 54.64L1458.50 58.98L1450.75 54.64Z M1450.75 44.64L1458.50 48.98L1466.25 44.64M1458.50 48.98L1458.50 58.98" fill="none" stroke="#111" stroke-width="1.3" stroke-linejoin="miter"/>
<rect x="1466" y="41" width="5.5" height="20.6" fill="#fff" stroke="#111" stroke-width="1.2"/>
<path d="M1466 44.5H1469M1466 47H1468M1466 49.5H1469M1466 52H1468M1466 54.5H1469M1466 57H1468M1466 59.5H1469" stroke="#111" stroke-width="0.8"/>
<path d="M1495.3 43.3H1512.8V47.5H1507V62H1501V47.5H1495.3Z" fill="#fff" stroke="#fff" stroke-width="2"/><path d="M1495.3 43.3H1512.8V47.5H1507V62H1501V47.5H1495.3Z" fill="#222"/>
<path d="M1539.5 51.5L1548 43Q1551 40 1554 43Q1557 46 1554 49L1545.5 57.5" fill="none" stroke="#111" stroke-width="5.4" stroke-linecap="butt"/>
<path d="M1539.5 51.5L1548 43Q1551 40 1554 43Q1557 46 1554 49L1545.5 57.5" fill="none" stroke="#fff" stroke-width="3"/>
<polygon points="1536.2,50.5 1540,46.7 1543.3,50 1539.5,53.8" fill="#222"/><polygon points="1544.2,58.5 1548,54.7 1551.3,58 1547.5,61.8" fill="#222"/>
<polygon points="1623,45.5 1633,41 1644,45.5 1644,55.5 1633,61.5 1623,56.5" fill="#fff" stroke="#fff" stroke-width="2" stroke-linejoin="round"/>
<path d="M1623 45.50L1633 50.30" stroke="#111" stroke-width="1.15"/>
<path d="M1623 48.25L1633 53.05" stroke="#111" stroke-width="1.15"/>
<path d="M1623 51.00L1633 55.80" stroke="#111" stroke-width="1.15"/>
<path d="M1623 53.75L1633 58.55" stroke="#111" stroke-width="1.15"/>
<path d="M1623 56.50L1633 61.30" stroke="#111" stroke-width="1.15"/>
<path d="M1623 45.5L1633 41L1644 45.5L1633 50.3Z" fill="#fff" stroke="#111" stroke-width="1.15" stroke-linejoin="round"/>
<path d="M1623 45.5V56.5 M1633 50.3V61.5 M1644 45.5V55.5 M1633 61.5L1644 55.5" fill="none" stroke="#111" stroke-width="0.9"/>
<path d="M1633.5 53.5L1643.5 47.5M1633.5 56.5L1643.5 50.5M1633.5 59.5L1643.5 53.5" stroke="#111" stroke-width="1.1"/>
<polygon points="1094.9,71.5 1094.9,74.5 1091.9,74.5" fill="#a5a5a5"/>
<polygon points="1181.5,71.5 1181.5,74.5 1178.5,74.5" fill="#a5a5a5"/>
<polygon points="1224.5,71.5 1224.5,74.5 1221.5,74.5" fill="#a5a5a5"/>
<polygon points="1267.5,71.5 1267.5,74.5 1264.5,74.5" fill="#a5a5a5"/>
<polygon points="1310.5,71.5 1310.5,74.5 1307.5,74.5" fill="#a5a5a5"/>
<polygon points="1352.9,71.5 1352.9,74.5 1349.9,74.5" fill="#a5a5a5"/>
<polygon points="1395.9,71.5 1395.9,74.5 1392.9,74.5" fill="#a5a5a5"/>
<polygon points="1438.8,71.5 1438.8,74.5 1435.8,74.5" fill="#a5a5a5"/>
<rect x="2552" y="83" width="8" height="1317" fill="#b8bfc3"/>
<rect x="2551.5" y="83" width="0.8" height="1317" fill="#dfe3e5"/>
<rect x="2552" y="685.5" width="8" height="150" fill="#0a9bd0"/>
<rect x="2552" y="685.5" width="1" height="150" fill="#5fd3f2"/>
<polygon points="2553,760.5 2559,755.5 2559,765.5" fill="#fff"/>
<ellipse cx="2500" cy="170" rx="36" ry="11" fill="#cfcfcf" opacity="0.45" filter="url(#blur6)"/>
<defs><linearGradient id="vcl" x1="0" y1="0" x2="0" y2="1"><stop offset="0" stop-color="#f7f7f7"/><stop offset="1" stop-color="#d6d6d6"/></linearGradient>
<linearGradient id="vcr" x1="0" y1="0" x2="0" y2="1"><stop offset="0" stop-color="#f2f2f2"/><stop offset="1" stop-color="#d2d2d2"/></linearGradient></defs>
<polygon points="2495.1,103.0 2532.5,112.9 2502.0,130.5 2462.2,116.7" fill="#f4f4f4"/>
<polygon points="2462.2,116.7 2502.0,130.5 2502.7,176.3 2465.3,158.8" fill="url(#vcl)"/>
<polygon points="2502.0,130.5 2532.5,112.9 2529.8,153.4 2502.7,176.3" fill="url(#vcr)"/>
<path d="M2462.2 116.7L2495.1 103L2532.5 112.9L2529.8 153.4L2502.7 176.3L2465.3 158.8Z M2462.2 116.7L2502 130.5L2532.5 112.9 M2502 130.5L2502.7 176.3" fill="none" stroke="#9a9a9a" stroke-width="0.8" stroke-dasharray="3 2"/>
<polygon points="2495,127 2501.5,123.5 2509,127 2502,131" fill="#bfe6f3"/><polygon points="2495,127 2502,131 2502,139.5 2495.5,136.5" fill="#a9dcf0"/><polygon points="2502,131 2509,127 2508.5,135.5 2502,139.5" fill="#b5e1f2"/>
<g font-family="Liberation Sans" font-weight="bold" fill="#111">
<text x="0" y="0" font-size="11" transform="matrix(0.69 0.31 0 1.1 2472.5 147)">BACK</text>
<text x="0" y="0" font-size="11" transform="matrix(0.52 -0.37 0.08 1.1 2511 154)">LEFT</text>
<text x="0" y="0" font-size="8" transform="matrix(-0.9 -0.35 0.8 -0.45 2508 117)" >TOP</text>
</g>
<rect x="2493.3" y="216" width="35.6" height="349.6" fill="#f0f0f0" stroke="#c3c3c3" stroke-width="2"/>
<path d="M2511.3 229V246M2502.8 237.5H2519.8" stroke="#111" stroke-width="1.3"/>
<polygon points="2511.3,227.5 2509.0,231 2513.6000000000004,231" fill="#111"/><polygon points="2511.3,247.5 2509.0,244 2513.6000000000004,244" fill="#111"/><polygon points="2501.3,237.5 2504.8,235.2 2504.8,239.8" fill="#111"/><polygon points="2521.3,237.5 2517.8,235.2 2517.8,239.8" fill="#111"/>
<polygon points="2510.50,265.50 2516.00,268.58 2510.50,271.66 2505.00,268.58" fill="#fff"/><polygon points="2505.00,268.58 2510.50,271.66 2510.50,278.16 2505.00,275.08" fill="#6a6a6a"/><polygon points="2510.50,271.66 2516.00,268.58 2516.00,275.08 2510.50,278.16" fill="#2a2a2a"/><path d="M2505.00 268.58L2510.50 265.50L2516.00 268.58L2516.00 275.08L2510.50 278.16L2505.00 275.08Z M2505.00 268.58L2510.50 271.66L2516.00 268.58M2510.50 271.66L2510.50 278.16" fill="none" stroke="#111" stroke-width="1.0" stroke-linejoin="miter"/>
<path d="M2509.3 262.5Q2519.3 263 2520.3 272.5" fill="none" stroke="#111" stroke-width="1.1"/><path d="M2512.3 281.5Q2502.3 281 2501.3 271.5" fill="none" stroke="#111" stroke-width="1.1"/>
<polygon points="2510.3,260.8 2513.8,262.5 2510.3,264.5" fill="#111"/><polygon points="2511.3,279.5 2515.3,281.5 2511.3,283.5" fill="#111"/>
<circle cx="2508.8" cy="303.5" r="6.3" fill="#fff" stroke="#111" stroke-width="1.3"/><path d="M2513.3 308L2519.3 314" stroke="#111" stroke-width="3"/>
<rect x="2498" y="327.9" width="26" height="1.4" fill="url(#seph)"/>
<path d="M2501.3 345V341H2505.3 M2517.3 341H2521.3V345 M2501.3 356V360H2505.3 M2517.3 360H2521.3V356" fill="none" stroke="#111" stroke-width="1.2"/>
<polygon points="2510.50,344.00 2516.00,347.08 2510.50,350.16 2505.00,347.08" fill="#fff"/><polygon points="2505.00,347.08 2510.50,350.16 2510.50,357.16 2505.00,354.08" fill="#6a6a6a"/><polygon points="2510.50,350.16 2516.00,347.08 2516.00,354.08 2510.50,357.16" fill="#2a2a2a"/><path d="M2505.00 347.08L2510.50 344.00L2516.00 347.08L2516.00 354.08L2510.50 357.16L2505.00 354.08Z M2505.00 347.08L2510.50 350.16L2516.00 347.08M2510.50 350.16L2510.50 357.16" fill="none" stroke="#111" stroke-width="1.0" stroke-linejoin="miter"/>
<circle cx="2516.3" cy="381" r="5.8" fill="#fff" stroke="#111" stroke-width="1"/>
<polygon points="2508.30,376.50 2515.80,380.70 2508.30,384.90 2500.80,380.70" fill="#fff"/><polygon points="2500.80,380.70 2508.30,384.90 2508.30,393.90 2500.80,389.70" fill="#6a6a6a"/><polygon points="2508.30,384.90 2515.80,380.70 2515.80,389.70 2508.30,393.90" fill="#2a2a2a"/><path d="M2500.80 380.70L2508.30 376.50L2515.80 380.70L2515.80 389.70L2508.30 393.90L2500.80 389.70Z M2500.80 380.70L2508.30 384.90L2515.80 380.70M2508.30 384.90L2508.30 393.90" fill="none" stroke="#111" stroke-width="1.1" stroke-linejoin="miter"/>
<path d="M2501.3 420.6Q2511.3 408 2521.3 420.6Q2511.3 433 2501.3 420.6Z" fill="#fff" stroke="#111" stroke-width="1.3"/><circle cx="2511.3" cy="420.6" r="3.6" fill="#555"/>
<path d="M2500.8 449.5H2509.3 L2521.3 462.5H2502.3Z M2501.3 453.5H2512.3 M2501.8 458H2517.3 M2506.3 449.5L2508.3 462.5 M2511.3 449.5L2514.3 462.5" fill="#fff" stroke="#111" stroke-width="1.1"/>
<path d="M2506.3 452Q2513.3 443 2521.3 452Q2513.3 461 2506.3 452Z" fill="#fff" stroke="#111" stroke-width="1.1"/><circle cx="2514.3" cy="452" r="2.6" fill="#666"/>
<rect x="2497" y="476.5" width="26" height="1.4" fill="url(#seph)"/>
<rect x="2500" y="492" width="2" height="2" fill="#111"/>
<rect x="2500" y="509" width="2" height="2" fill="#111"/>
<rect x="2520" y="509" width="2" height="2" fill="#111"/>
<polygon points="2500.2,498.3 2505.8,495.3 2517.4,501.4 2512.2,504.4" fill="#fff"/><polygon points="2500.2,498.3 2512.2,504.4 2512.2,511.7 2500.2,505" fill="#5e5e5e"/><polygon points="2512.2,504.4 2517.4,501.4 2517.4,508.6 2512.2,511.7" fill="#2a2a2a"/>
<path d="M2500.2 498.3L2505.8 495.3L2517.4 501.4L2512.2 504.4Z M2512.2 504.4V511.7L2500.2 505V498.3 M2517.4 501.4V508.6L2512.2 511.7 M2506.2 501.3L2511.6 498.3" fill="none" stroke="#111" stroke-width="1.1" stroke-linejoin="round"/>
<path d="M2513.3 495.3L2517.3 491.3Q2519.5 489.1 2521.7 491.3Q2523.9 493.5 2521.7 495.7L2517.7 499.7" fill="none" stroke="#111" stroke-width="3.4"/><path d="M2513.3 495.3L2517.3 491.3Q2519.5 489.1 2521.7 491.3Q2523.9 493.5 2521.7 495.7L2517.7 499.7" fill="none" stroke="#fff" stroke-width="1.4"/>
<path d="M2511.5 493.5L2514.3 496.3M2516 498L2518.8 500.8" stroke="#111" stroke-width="3.2"/>
<rect x="2499.4" y="532.5" width="6.4" height="5" fill="#222"/><ellipse cx="2502.6" cy="532.5" rx="3.2" ry="1.4" fill="#ddd" stroke="#222" stroke-width="0.8"/>
<path d="M2499.7 538.5Q2500 548 2508 549.8L2521 551" fill="none" stroke="#111" stroke-width="1.1" stroke-dasharray="1 1"/>
<path d="M2505.5 541L2515 532.5Q2518.5 529.5 2521.5 533Q2524 536.5 2521 540L2513 547.5" fill="none" stroke="#111" stroke-width="4.6"/><path d="M2505.5 541L2515 532.5Q2518.5 529.5 2521.5 533Q2524 536.5 2521 540L2513 547.5" fill="none" stroke="#fff" stroke-width="2.2"/>
<path d="M2503.8 539.3L2507.2 542.7M2511.3 545.8L2514.7 549.2" stroke="#111" stroke-width="4"/>
<path d="M2502.4 551.1L2523 530.6" stroke="#fff" stroke-width="3.6"/><path d="M2502.4 551.1L2523 530.6" stroke="#111" stroke-width="1.8"/>
<rect x="2401" y="1320" width="135" height="21.8" fill="#c9c9c9"/>
<rect x="2402" y="1348.2" width="62.6" height="19.4" fill="#fff" stroke="#c6c6c6" stroke-width="2"/>
<rect x="2472" y="1348.2" width="63" height="19.4" fill="#fff" stroke="#c6c6c6" stroke-width="2"/>
</svg>

<div class="abs" style="left:23px;top:4px;font-size:13px;line-height:16px;color:#6b737c;letter-spacing:-0.25px">Untitled*</div>
<div class="abs" style="left:64.5px;top:34.3px;font-size:15px;line-height:16px;color:#2b2b2b;transform:scaleX(0.845);transform-origin:0 0;white-space:nowrap">AUTODESK<span style="font-size:8px;vertical-align:6px;margin-left:1px">&reg;</span></div>
<div class="abs" style="left:64px;top:49px;font-size:14px;line-height:16px;font-weight:bold;color:#383838;letter-spacing:0.1px">123D<span style="font-size:6px;vertical-align:7px">&reg;</span> DESIGN</div>
<div class="abs" style="left:2304px;top:36px;width:136px;height:34.5px;background:#0a9bd2;border-top:1px solid #55d2f2;border-radius:2px;box-shadow:0 1px 0 #0b6e99;color:#fff;text-align:center">
 <div style="font-size:14.5px;font-weight:bold;line-height:15px;margin-top:2.5px">Go Premium</div>
 <div style="font-size:8.4px;line-height:9px;margin-top:3.5px;letter-spacing:-0.05px;white-space:nowrap">(FOR COMMERCIAL USE)</div>
</div>
<div class="abs" style="left:2446px;top:36px;width:68.7px;height:34.5px;background:#0a9bd2;border-top:1px solid #55d2f2;border-radius:2px;box-shadow:0 1px 0 #0b6e99;color:#fff;text-align:center;font-size:15px;font-weight:bold;line-height:32px">Sign In</div>
<div class="abs" style="left:2521px;top:36px;width:33.7px;height:33.7px;background:linear-gradient(#fdfdfd,#d9d9d9);border:1px solid #c8c8c8;color:#222;text-align:center;font-size:16px;line-height:32px">?</div>


<div class="abs" style="left:2401px;top:1320px;width:135px;height:22px;text-align:center;font-size:13.5px;font-weight:bold;line-height:22px;color:#111;letter-spacing:-0.2px">Edit Grid</div>
<div class="abs" style="left:2401px;top:1347px;width:64px;height:21px;text-align:center;font-size:13px;font-weight:bold;line-height:21px;color:#111">1</div>
<div class="abs" style="left:2471px;top:1347px;width:65px;height:21px;text-align:center;font-size:13px;font-weight:bold;line-height:21px;color:#111">1</div>
<div class="abs" style="left:2401px;top:1372px;width:64px;text-align:center;font-size:9px;font-weight:bold;line-height:14px;color:#111">Linear Snap</div>
<div class="abs" style="left:2469px;top:1372px;width:68px;text-align:center;font-size:9px;font-weight:bold;line-height:14px;color:#111">Angular Snap</div>

<svg class="abs" style="left:0;top:0" width="2560" height="1440" viewBox="0 0 2560 1440">
<rect x="0" y="1400" width="2560" height="40" fill="#000"/>
<rect x="48" y="1400" width="344" height="40" fill="#2b2b2b"/>
<path d="M16 1414.2L22.8 1413.2V1419.6H16Z M23.8 1413.1L32 1412V1419.6H23.8Z M16 1420.6H22.8V1427L16 1426Z M23.8 1420.6H32V1428.2L23.8 1427.1Z" fill="#fff"/>
<circle cx="68" cy="1420" r="9.6" fill="none" stroke="#fff" stroke-width="2.6"/>
<rect x="367.5" y="1412.5" width="6.5" height="10" rx="3.2" fill="none" stroke="#c8c8c8" stroke-width="1.1"/><path d="M366 1420Q366 1425 370.75 1425Q375.5 1425 375.5 1420M370.75 1425V1427.5M368 1427.5H373.5" fill="none" stroke="#c8c8c8" stroke-width="1.1"/>
<rect x="409.5" y="1413.5" width="13" height="13" fill="none" stroke="#fff" stroke-width="1.6"/><path d="M407 1415.5V1424.5M425 1415.5V1424.5" stroke="#fff" stroke-width="1.4"/>
<circle cx="466" cy="1420" r="11" fill="#dd4b39"/>
<path d="M466 1420L456.5 1425.5A11 11 0 0 1 456.5 1414.5Z" fill="#0f9d58"/>
<path d="M466 1420L456.5 1425.5A11 11 0 0 0 475.5 1425.5Z" fill="#0f9d58"/>
<path d="M466 1420L475.5 1425.5A11 11 0 0 0 477 1420L477 1414.5Z" fill="#ffcd40"/>
<path d="M466 1420L477 1419.5A11 11 0 0 1 466 1431Z" fill="#ffcd40"/>
<circle cx="466" cy="1420" r="5" fill="#fff"/><circle cx="466" cy="1420" r="3.8" fill="#4a8af4"/>
<path d="M510 1411Q522 1408 526 1420Q524 1430 512 1431Q519 1424 517 1417Q515 1412 510 1411Z" fill="#2c4a6e"/><path d="M507 1413Q514 1412 516 1419Q516 1426 510 1430Q513 1420 507 1413Z" fill="#b9c9da"/><circle cx="505" cy="1420" r="2.8" fill="#2aa84a"/>
<polygon points="557,1408 575,1412 575,1423 557,1420" fill="#6fc7f1"/><polygon points="553,1426 565,1424 568,1428 556,1431" fill="#e6e6e6"/><polygon points="566,1424 574,1423 575,1426 568,1427" fill="#bbb"/>
<circle cx="613" cy="1420" r="10.7" fill="#1b4b78"/><circle cx="616.5" cy="1416.5" r="4.2" fill="none" stroke="#e8eef4" stroke-width="1.8"/><path d="M603 1422L613 1426" stroke="#e8eef4" stroke-width="3"/><circle cx="611" cy="1425" r="2.5" fill="#e8eef4"/>
<rect x="650.5" y="1408.5" width="23" height="23" fill="#1a2c6c" stroke="#b39552" stroke-width="1.3"/><path d="M656 1411.5H662V1426H669L668 1429H656Z" fill="#e6c46a"/><path d="M658 1412H660.5V1426.5H666" fill="none" stroke="#3868c8" stroke-width="1.2"/>
<rect x="700.5" y="1409.5" width="20.5" height="20" fill="#061e30" stroke="#31a8ff" stroke-width="1.2"/>
<text x="703.5" y="1424.5" font-family="Liberation Sans" font-size="12" fill="#31a8ff">Ps</text>
<circle cx="760" cy="1420" r="12" fill="#1ed760"/><path d="M753 1415.5Q760 1413 767 1416.5M754 1419.5Q760 1417.5 766 1420.5M755 1423.2Q760 1421.8 765 1424" fill="none" stroke="#111" stroke-width="1.8" stroke-linecap="round"/>
<rect x="797.5" y="1409" width="22.5" height="21" fill="#2a2a2a"/><path d="M800 1429Q802 1418 819 1416V1429Z" fill="#76b900"/><path d="M806 1428Q808 1422 819 1421V1428Z" fill="#2a2a2a"/><path d="M811 1428Q813 1425 819 1425V1428Z" fill="#76b900"/>
<polygon points="846.5,1410 869.5,1410 858,1428.5" fill="#21a5dd"/><polygon points="858,1415 869.5,1410 858,1428.5" fill="#147bb0"/><polygon points="846.5,1410 869.5,1410 858,1415" fill="#8ad6f3"/>
<rect x="883" y="1400" width="48" height="40" fill="#333"/>
<path d="M896 1413H903L905 1415H917V1429H896Z" fill="#e9bf4c"/><rect x="896" y="1416" width="21" height="13" fill="#f6d66e"/><path d="M901 1429V1422H912V1429H909V1425H904V1429Z" fill="#2ba3e0"/>
<rect x="446" y="1438" width="40" height="2" fill="#cdcdcd"/>
<rect x="495" y="1438" width="40" height="2" fill="#cdcdcd"/>
<rect x="740" y="1438" width="40" height="2" fill="#cdcdcd"/>
<rect x="789" y="1438" width="40" height="2" fill="#cdcdcd"/>
<rect x="838" y="1438" width="40" height="2" fill="#cdcdcd"/>
<rect x="883" y="1438" width="48" height="2" fill="#cdcdcd"/>
<path d="M2366 1423.5L2371.5 1418L2377 1423.5" fill="none" stroke="#fff" stroke-width="1.2"/>
<defs><radialGradient id="ball" cx="0.4" cy="0.35" r="0.7"><stop offset="0" stop-color="#8ab4ff"/><stop offset="0.5" stop-color="#2a5fd8"/><stop offset="1" stop-color="#0a2a8a"/></radialGradient></defs><circle cx="2396" cy="1420.5" r="6" fill="url(#ball)"/>
<rect x="2413.5" y="1415.5" width="13" height="9" fill="none" stroke="#fff" stroke-width="1.1"/><path d="M2420 1424.5V1427.5M2415 1427.5H2425" stroke="#fff" stroke-width="1.1"/><rect x="2412.5" y="1413" width="3" height="3" fill="#000" stroke="#fff" stroke-width="0.8"/>
<path d="M2437 1418H2440L2444 1414.5V1426.5L2440 1423H2437Z" fill="none" stroke="#fff" stroke-width="1.1"/><path d="M2446.5 1417.5Q2448.5 1420.5 2446.5 1423.5M2448.5 1415.5Q2452 1420.5 2448.5 1425.5" fill="none" stroke="#fff" stroke-width="1"/>
<path d="M2460 1412H2476.3V1425H2470.5L2468 1428.2L2465.5 1425H2460Z" fill="#fff"/><path d="M2462.5 1415.5H2473.5M2462.5 1418.5H2473.5M2462.5 1421.5H2470" stroke="#000" stroke-width="1"/>
<rect x="2555" y="1400" width="1" height="40" fill="#555"/>
</svg>

<div class="abs" style="left:88px;top:1410px;font-size:15px;line-height:20px;color:#c8c8c8;letter-spacing:-0.3px">Frag mich etwas</div>
<div class="abs" style="left:2486px;top:1403px;width:62px;text-align:center;font-size:12px;line-height:16px;color:#fff">17:26</div>
<div class="abs" style="left:2486px;top:1419px;width:62px;text-align:center;font-size:12px;line-height:16px;color:#fff;letter-spacing:-0.3px">26.04.2016</div>

</body></html>
